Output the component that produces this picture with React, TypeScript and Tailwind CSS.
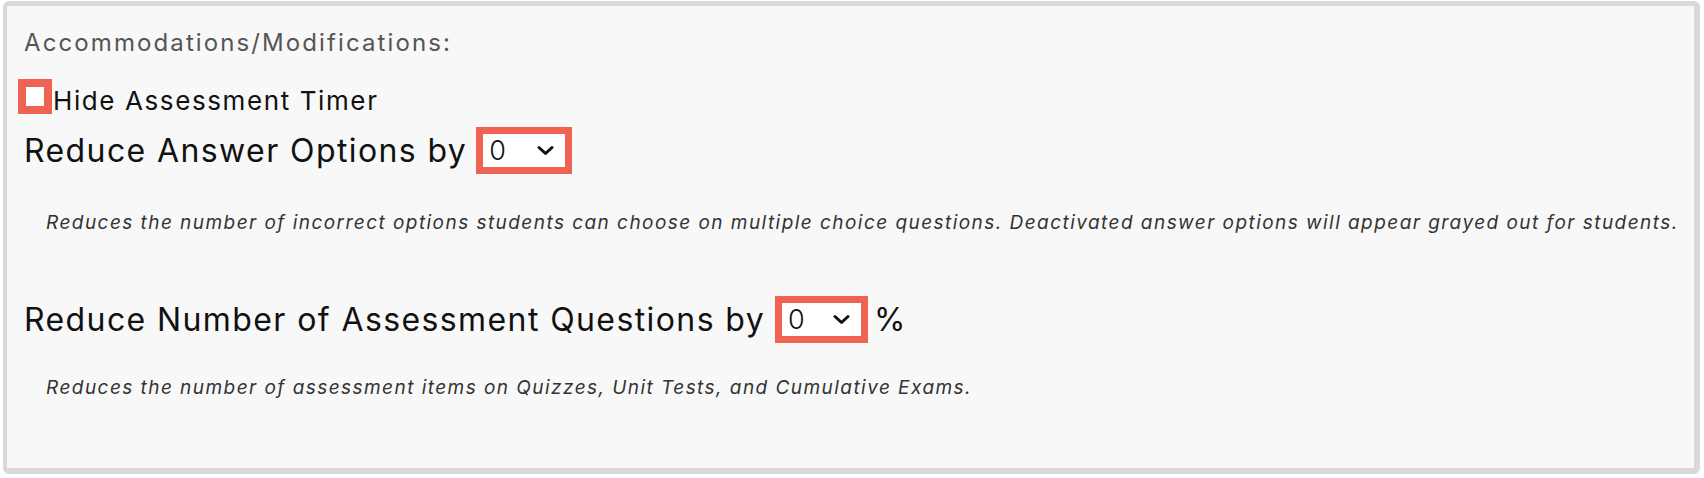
import React from "react";

const FONT = { fontFamily: "Inter, 'Noto Sans', sans-serif" };

function Chevron() {
  return (
    <svg width="17" height="11" viewBox="0 0 17 11" fill="none">
      <path d="M2 2.5 L8.5 8.5 L15 2.5" stroke="#111" strokeWidth="3" strokeLinecap="round" strokeLinejoin="round" />
    </svg>
  );
}

function SelectBox({ width }: { width: string }) {
  return (
    <div className={`flex h-[47px] ${width} shrink-0 items-center justify-between border-[7px] border-[#ee6352] bg-white pl-[6px] pr-[11px]`}>
      <span className="text-[27px] font-light leading-none text-[#111]">0</span>
      <Chevron />
    </div>
  );
}

export default function App() {
  return (
    <div className="h-[478px] w-full bg-white pl-[3px] pr-[4px] pt-[1px] pb-[4px]" style={FONT}>
      <div className="h-full w-full rounded-[6px] border-t-[5px] border-l-[4px] border-r-[6px] border-b-[6px] border-[#d9d9d9] bg-[#f8f8f8] pl-[17px] pt-[22px]">
        {/* Header */}
        <div className="h-[30px] text-[24px] leading-[30px] tracking-[2.1px] text-[#555]">Accommodations/Modifications:</div>

        {/* Timer checkbox */}
        <div className="ml-[-6px] mt-[21px] flex h-[35px] items-center">
          <div className="h-[35px] w-[34px] shrink-0 border-[8px] border-[#ee6352] bg-white" />
          <span className="ml-[1px] mt-[8px] text-[26px] leading-none tracking-[1.6px] text-[#111]">Hide Assessment Timer</span>
        </div>

        {/* Answer options */}
        <div className="mt-[13px] flex h-[47px] items-center">
          <span className="text-[32px] leading-none tracking-[1.4px] text-[#111]">Reduce Answer Options by</span>
          <div className="ml-[9px]">
            <SelectBox width="w-[96px]" />
          </div>
        </div>
        <p className="mt-[37px] pl-[22px] text-[19px] italic leading-[24px] tracking-[1.45px] text-[#333]">
          Reduces the number of incorrect options students can choose on multiple choice questions. Deactivated answer options will appear grayed out for students.
        </p>

        {/* Number of questions */}
        <div className="mt-[61px] flex h-[47px] items-center">
          <span className="text-[32px] leading-none tracking-[1.4px] text-[#111]">Reduce Number of Assessment Questions by</span>
          <div className="ml-[10px]">
            <SelectBox width="w-[93px]" />
          </div>
          <span className="ml-[6px] text-[32px] leading-none text-[#111]">%</span>
        </div>
        <p className="mt-[33px] pl-[22px] text-[19px] italic leading-[24px] tracking-[1.45px] text-[#333]">
          Reduces the number of assessment items on Quizzes, Unit Tests, and Cumulative Exams.
        </p>
      </div>
    </div>
  );
}
